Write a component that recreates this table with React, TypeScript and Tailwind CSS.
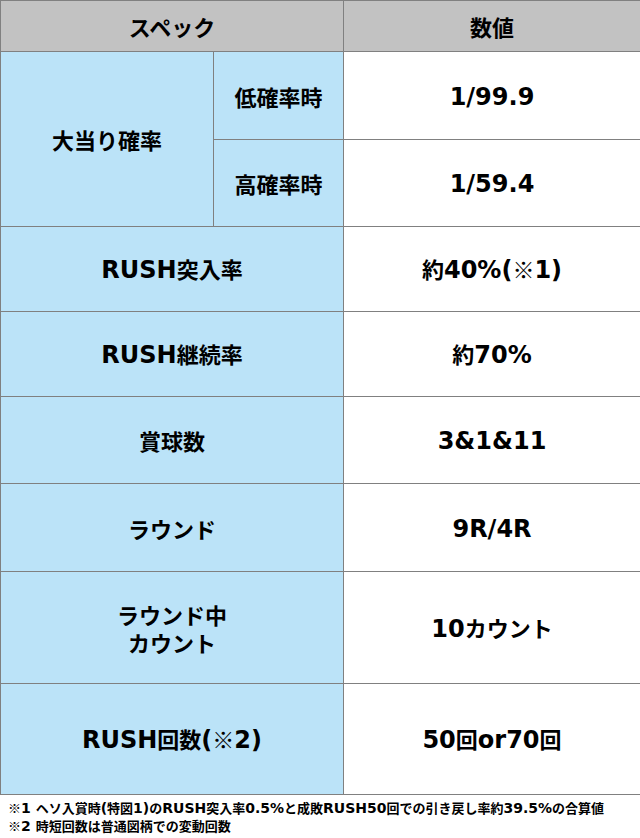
import type { ReactNode } from "react";

// ASCII runs are set in a wider latin face, the rest in the CJK face
function Txt({ s, latin }: { s: string; latin: string }) {
  return (
    <>
      {s.split(/([\x20-\x7E]+)/).map((part, i) =>
        /^[\x20-\x7E]+$/.test(part) ? (
          <span key={i} className={latin}>
            {part}
          </span>
        ) : (
          part
        )
      )}
    </>
  );
}

const big = "font-['DejaVu_Sans',sans-serif] text-[24px]";
const small = "font-['DejaVu_Sans',sans-serif] text-[14px]";

const rows: { label: ReactNode; value: string; h: string }[] = [
  { label: <Txt s="RUSH突入率" latin={big} />, value: "約40%(※1)", h: "h-[85px]" },
  { label: <Txt s="RUSH継続率" latin={big} />, value: "約70%", h: "h-[85px]" },
  { label: "賞球数", value: "3&1&11", h: "h-[87px]" },
  { label: "ラウンド", value: "9R/4R", h: "h-[88px]" },
  {
    label: (
      <>
        ラウンド中
        <br />
        カウント
      </>
    ),
    value: "10カウント",
    h: "h-[112px]",
  },
  { label: <Txt s="RUSH回数(※2)" latin={big} />, value: "50回or70回", h: "h-[111px]" },
];

export default function App() {
  const cell = "border border-[#808080] text-center align-middle";
  return (
    <div className="w-[640px] h-[838px] bg-white text-black font-bold font-['Noto_Sans_CJK_JP',sans-serif]">
      <table className="w-[640px] border-collapse table-fixed text-[22px] leading-[28px]">
        <colgroup>
          <col className="w-[213px]" />
          <col className="w-[130px]" />
          <col className="w-[297px]" />
        </colgroup>
        <tbody>
          <tr>
            <td colSpan={2} className={`${cell} h-[51px] bg-[#c2c2c2]`}>
              スペック
            </td>
            <td className={`${cell} bg-[#c2c2c2]`}>数値</td>
          </tr>
          <tr>
            <td rowSpan={2} className={`${cell} bg-[#bbe3f8]`}>
              大当り確率
            </td>
            <td className={`${cell} h-[88px] bg-[#bbe3f8]`}>低確率時</td>
            <td className={cell}>
              <Txt s="1/99.9" latin={big} />
            </td>
          </tr>
          <tr>
            <td className={`${cell} h-[87px] bg-[#bbe3f8]`}>高確率時</td>
            <td className={cell}>
              <Txt s="1/59.4" latin={big} />
            </td>
          </tr>
          {rows.map((r) => (
            <tr key={r.value}>
              <td colSpan={2} className={`${cell} ${r.h} bg-[#bbe3f8]`}>
                {r.label}
              </td>
              <td className={cell}>
                <Txt s={r.value} latin={big} />
              </td>
            </tr>
          ))}
        </tbody>
      </table>
      <div className="px-[8px] pt-[4px] text-[13px] leading-[18px]">
        <p>
          <Txt s="※1 ヘソ入賞時(特図1)のRUSH突入率0.5%と成敗RUSH50回での引き戻し率約39.5%の合算値" latin={small} />
        </p>
        <p>
          <Txt s="※2 時短回数は普通図柄での変動回数" latin={small} />
        </p>
      </div>
    </div>
  );
}
